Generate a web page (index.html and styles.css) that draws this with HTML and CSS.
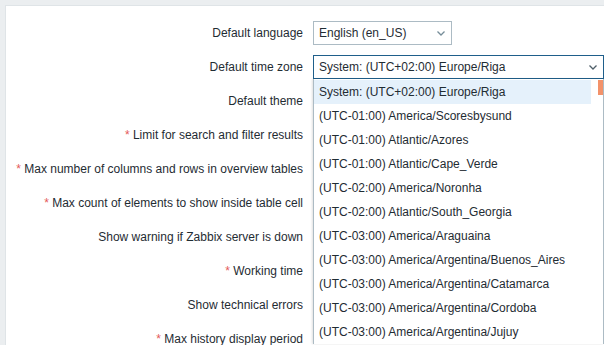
FILE: index.html
```html
<!DOCTYPE html>
<html>
<head>
<meta charset="utf-8">
<link rel="stylesheet" href="styles.css">
</head>
<body>
<div class="panel">
  <div class="form">
    <div class="lbl">Default language</div>
    <div class="ctl">
      <div class="select lang"><span>English (en_US)</span><svg class="chev" width="8" height="5" viewBox="0 0 8 5"><path d="M0.5 0.5 L4 4 L7.5 0.5" fill="none" stroke="#768d99" stroke-width="1.3"/></svg></div>
    </div>

    <div class="lbl">Default time zone</div>
    <div class="ctl tzctl">
      <div class="select tz"><span>System: (UTC+02:00) Europe/Riga</span><svg class="chev" width="8" height="5" viewBox="0 0 8 5"><path d="M0.5 0.5 L4 4 L7.5 0.5" fill="none" stroke="#4f5f69" stroke-width="1.3"/></svg></div>
      <div class="list">
        <ul class="items">
          <li class="hl">System: (UTC+02:00) Europe/Riga</li>
          <li>(UTC-01:00) America/Scoresbysund</li>
          <li>(UTC-01:00) Atlantic/Azores</li>
          <li>(UTC-01:00) Atlantic/Cape_Verde</li>
          <li>(UTC-02:00) America/Noronha</li>
          <li>(UTC-02:00) Atlantic/South_Georgia</li>
          <li>(UTC-03:00) America/Araguaina</li>
          <li>(UTC-03:00) America/Argentina/Buenos_Aires</li>
          <li>(UTC-03:00) America/Argentina/Catamarca</li>
          <li>(UTC-03:00) America/Argentina/Cordoba</li>
          <li>(UTC-03:00) America/Argentina/Jujuy</li>
        </ul>
        <div class="scroll"><div class="thumb"></div></div>
      </div>
    </div>

    <div class="lbl">Default theme</div>
    <div class="ctl"></div>

    <div class="lbl"><span class="req">*</span> Limit for search and filter results</div>
    <div class="ctl"></div>

    <div class="lbl"><span class="req">*</span> Max number of columns and rows in overview tables</div>
    <div class="ctl"></div>

    <div class="lbl"><span class="req">*</span> Max count of elements to show inside table cell</div>
    <div class="ctl"></div>

    <div class="lbl">Show warning if Zabbix server is down</div>
    <div class="ctl"></div>

    <div class="lbl"><span class="req">*</span> Working time</div>
    <div class="ctl"></div>

    <div class="lbl">Show technical errors</div>
    <div class="ctl"></div>

    <div class="lbl"><span class="req">*</span> Max history display period</div>
    <div class="ctl"></div>
  </div>
</div>
</body>
</html>
```

FILE: styles.css
```css
html, body {
  margin: 0;
  padding: 0;
  overflow: hidden;
}
body {
  background: #ebeef0;
  padding: 5px 0 0 5px;
  font-family: "Liberation Sans", Arial, sans-serif;
  font-size: 12px;
  color: #1f2c33;
  height: 345px;
  box-sizing: border-box;
}
.panel {
  background: #ffffff;
  border-top: 1px solid #dfe4e7;
  border-left: 1px solid #dfe4e7;
  height: 100%;
  padding-top: 15px;
  box-sizing: border-box;
  overflow: hidden;
}
.form {
  display: grid;
  grid-template-columns: 297px 1fr;
  grid-auto-rows: 24px;
  column-gap: 10px;
  row-gap: 10px;
}
.lbl {
  text-align: right;
  line-height: 24px;
  white-space: nowrap;
}
.req {
  color: #e45959;
}
.ctl {
  position: relative;
}
.select {
  box-sizing: border-box;
  height: 24px;
  border: 1px solid #acbbc4;
  background: #fff;
  display: flex;
  align-items: center;
  justify-content: space-between;
  padding: 0 6px 0 5px;
}
.select span {
  line-height: 22px;
}
.lang {
  width: 139px;
}
.tz {
  width: 291px;
  border-color: #1f5f8b;
}
.chev {
  display: block;
}
.list {
  position: absolute;
  top: 24px;
  left: 0;
  width: 291px;
  box-sizing: border-box;
  border-left: 1px solid #acbbc4;
  border-right: 1px solid #acbbc4;
  background: #fff;
  display: flex;
  padding-top: 1px;
  box-shadow: -1px 0 2px rgba(0, 0, 0, 0.12);
}
.items {
  list-style: none;
  margin: 0;
  padding: 0;
  width: 277px;
}
.items li {
  height: 24px;
  line-height: 24px;
  padding-left: 5px;
  white-space: nowrap;
}
.items li.hl {
  background: #e5f1fb;
}
.scroll {
  flex: 1;
  display: flex;
  justify-content: flex-end;
}
.thumb {
  width: 5px;
  height: 15px;
  background: #f3926a;
}
```
